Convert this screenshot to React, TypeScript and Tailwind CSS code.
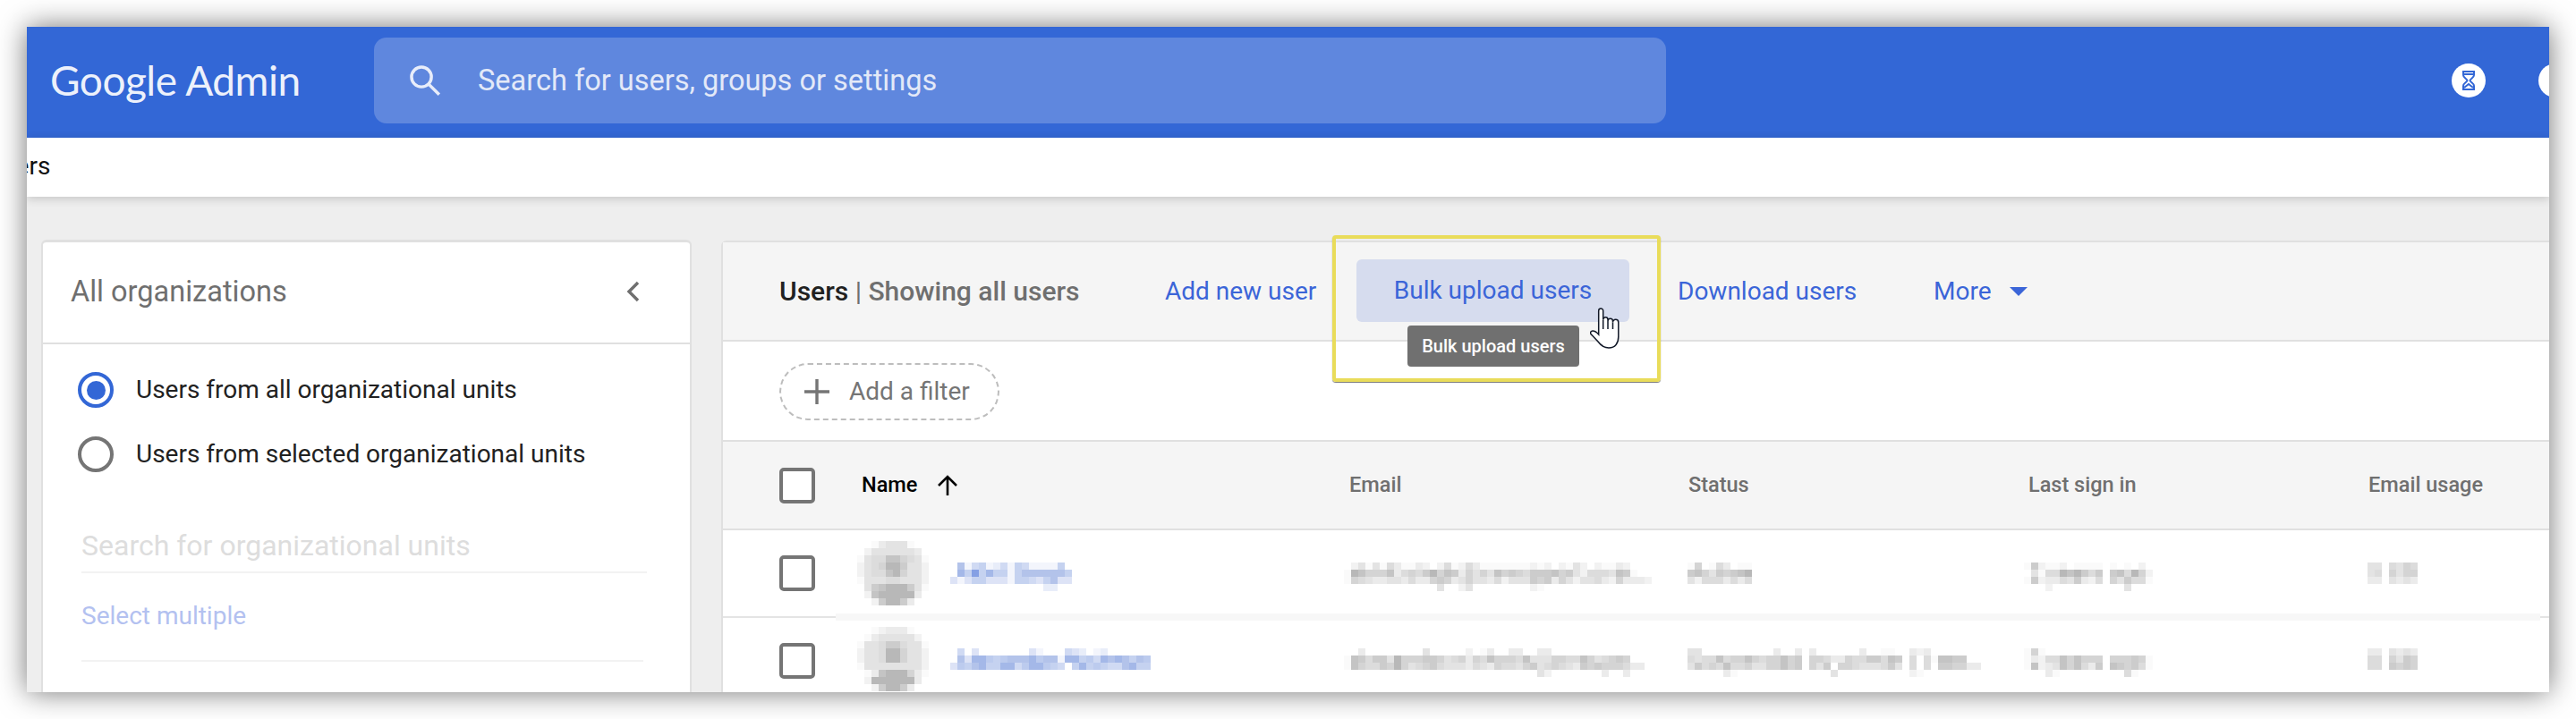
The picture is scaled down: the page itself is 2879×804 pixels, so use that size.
import React from "react";

const GRAY = ["none", "#fafafa", "#f2f2f2", "#ebebeb", "#e3e3e3", "#dcdcdc", "#d4d4d4", "#cccccc", "#c4c4c4", "#b8b8b8"];
const BLUE = ["none", "#f3f5fc", "#e8edf9", "#dde3f6", "#d0daf3", "#c5d2f0", "#bccbee", "#b3c3ea", "#a4b8e8", "#85a0e4"];

function Mosaic({ rows, ramp = GRAY, className = "" }: { rows: string[]; ramp?: string[]; className?: string }) {
  const w = Math.max(...rows.map((r) => r.length));
  return (
    <svg width={w * 8} height={rows.length * 8} viewBox={`0 0 ${w * 8} ${rows.length * 8}`} shapeRendering="crispEdges" className={"block shrink-0 " + className}>
      {rows.map((r, y) =>
        r.split("").map((c, x) => (c === "0" ? null : <rect key={x + "-" + y} x={x * 8} y={y * 8} width={8} height={8} fill={ramp[Number(c)]} />))
      )}
    </svg>
  );
}

const AVATAR = ["0013444100", "0244444430", "1455886541", "2456997442", "2455896442", "1444554442", "0478999741", "0289999930", "0027997300"];
const AVATAR2 = ["0012333100", "0134444420", "1445775441", "2445996442", "2445996442", "1444444442", "0138999631", "0299999930", "0027997300"];
const NAME1 = ["0714512415411115", "08595855157777775", "31355333155435733", "000000000000022"];
const NAME2 = ["0403000000031000432012000000", "0738865677786771885648787576", "3657855884688654058565447855", ""];
const EMAIL1 = ["0241415311320251253111111121202142021132", "19866683565796873646486765777867425554871", "1654334435336763464435244476736424453263332", "0000000000000400240000000021"];
const EMAIL2 = ["00300000000400000201300330033", "1875774966677645636586665844466558645676", "186557696456754443543655467456543767666533", "0000000000000000000000000004200000003003"];
const STATUS1 = ["160153011", "786476789", "425553535", ""];
const STATUS2 = ["4400000000003003030000003001100323", "545585668656686706653365577587050518877", "47565855644668670647066544457405050776633", "000003100000000000004000000000021"];
const LAST1 = ["17211201111010102", "041559897570785962", "172335473250647551", "000200000000004"];
const LAST2 = ["161", "132558686660666761", "182348685370876751", "0003100000000051"];
const USAGE1 = ["4405465", "4506466", "3304343", ""];
const USAGE2 = ["3304343", "5506476", "5507676", ""];

function Checkbox() {
  return <div className="h-[40px] w-[40px] rounded-[5px] border-[4px] border-[#757575] bg-white" />;
}

function Row({ name, email, status, last, usage, top, avatar, avatarClass }: { name: string[]; email: string[]; status: string[]; last: string[]; usage: string[]; top: string; avatar: string[]; avatarClass: string }) {
  return (
    <div className="grid h-[96px] shrink-0 grid-cols-[92px_545px_379px_380px_380px_1fr] items-center pl-[63px]">
      <Checkbox />
      <div className="-ml-[5px] flex items-center gap-[24px]">
        <Mosaic rows={avatar} className={avatarClass} />
        <Mosaic rows={name} ramp={BLUE} className={top} />
      </div>
      <Mosaic rows={email} className={"-ml-[6px] " + top} />
      <Mosaic rows={status} className={"-ml-[1px] " + top} />
      <Mosaic rows={last} className={"-ml-[5px] " + top} />
      <Mosaic rows={usage} className={"-ml-[1px] " + top} />
    </div>
  );
}

export default function App() {
  return (
    <div className="h-[804px] w-[2879px] overflow-hidden bg-white p-[30px] font-['Roboto',sans-serif]">
      <div className="flex h-[744px] w-[2819px] flex-col overflow-hidden bg-[#eeeeee] shadow-[0_0_30px_rgba(0,0,0,0.55)]">
        {/* top bar */}
        <header className="flex h-[124px] shrink-0 items-center bg-[#3367d6] pb-[4px] pl-[26px]">
          <span className="w-[362px] font-['Lato',sans-serif] text-[46px] leading-none tracking-[-0.5px] text-[#edf1fb]">Google Admin</span>
          <div className="flex h-[96px] w-[1444px] items-center rounded-[14px] bg-[#5f87de] pl-[38px]">
            <svg width="38" height="38" viewBox="0 0 24 24" fill="none" stroke="#e8edfa" strokeWidth="2.2" className="shrink-0">
              <circle cx="9.5" cy="9.5" r="7" />
              <path d="M14.6 14.6 L22 22" />
            </svg>
            <span className="ml-[40px] text-[32.5px] text-[#e3e9f8]">Search for users, groups or settings</span>
          </div>
          <div className="ml-auto flex h-[38px] w-[38px] items-center justify-center rounded-full bg-white">
            <svg width="14" height="22" viewBox="0 0 14 22" fill="none" stroke="#3367d6" strokeWidth="2">
              <path d="M1 1 H13 V5 C13 8 9 9 8.5 11 C9 13 13 14 13 17 V21 H1 V17 C1 14 5 13 5.5 11 C5 9 1 8 1 5 Z" />
              <path d="M2 4 H12 M2 19 L7 15 L12 19" />
            </svg>
          </div>
          <div className="-mr-[26px] ml-[59px] h-[38px] w-[38px] shrink-0 rounded-full bg-white" />
        </header>

        {/* breadcrumb */}
        <div className="relative z-10 flex h-[66px] shrink-0 items-center bg-white pb-[2px] shadow-[0_2px_10px_rgba(0,0,0,0.18)]">
          <span className="-ml-[45px] text-[28px] text-[#111111]">Users</span>
        </div>

        {/* body */}
        <div className="flex min-h-0 flex-1 pl-[16px] pt-[48px]">
          {/* left card */}
          <aside className="flex w-[727px] shrink-0 flex-col rounded-t-[6px] border-x-2 border-t-[3px] border-[#e0e0e0] bg-white">
            <div className="flex h-[114px] shrink-0 items-center justify-between border-b-2 border-[#e0e0e0] pb-[2px] pl-[31px] pr-[55px]">
              <span className="text-[32.5px] text-[#6f6f6f]">All organizations</span>
              <svg width="16" height="24" viewBox="0 0 16 24" fill="none" stroke="#6f6f6f" strokeWidth="3.4">
                <path d="M13 2 L3 12 L13 22" />
              </svg>
            </div>
            <div className="ml-[39px] mt-[31px] flex h-[40px] items-center gap-[25px]">
              <div className="flex h-[40px] w-[40px] items-center justify-center rounded-full border-[4px] border-[#3367d6]">
                <div className="h-[21px] w-[21px] rounded-full bg-[#3367d6]" />
              </div>
              <span className="text-[28px] text-[#212121]">Users from all organizational units</span>
            </div>
            <div className="ml-[39px] mt-[32px] flex h-[40px] items-center gap-[25px]">
              <div className="h-[40px] w-[40px] rounded-full border-[4px] border-[#757575]" />
              <span className="text-[28px] text-[#212121]">Users from selected organizational units</span>
            </div>
            <div className="ml-[43px] mr-[48px] mt-[62px] h-[51px] border-b-2 border-[#f2f2f2] text-[32px] leading-[40px] text-[#dddddd]">Search for organizational units</div>
            <div className="ml-[43px] mt-[28px] text-[28px] leading-[40px] text-[#b3c1f0]">Select multiple</div>
            <div className="ml-[43px] mr-[52px] mt-[29px] h-[2px] bg-[#f2f2f2]" />
          </aside>

          {/* right card */}
          <main className="ml-[33px] mt-[1px] flex min-w-0 flex-1 flex-col rounded-tl-[6px] border-l-2 border-t-2 border-[#e0e0e0] bg-white">
            <div className="relative flex h-[111px] shrink-0 items-center border-b-2 border-[#e0e0e0] bg-[#f5f5f5] pl-[63px]">
              <div className="w-[431px] text-[30px]">
                <span className="font-medium text-[#212121]">Users</span>
                <span className="text-[#6f6f6f]"> | </span>
                <span className="font-medium text-[#6f6f6f]">Showing all users</span>
              </div>
              <span className="w-[214px] text-[28px] text-[#3b65d8]">Add new user</span>
              <div className="mb-[1px] flex h-[70px] w-[305px] items-center justify-center rounded-[6px] bg-[#d6dcee] text-[28px] text-[#3b65d8]">Bulk upload users</div>
              <span className="ml-[54px] w-[286px] text-[28px] text-[#3b65d8]">Download users</span>
              <span className="w-[85px] text-[28px] text-[#3b65d8]">More</span>
              <svg width="20" height="10" viewBox="0 0 20 10" className="shrink-0">
                <path d="M0 0 H20 L10 10 Z" fill="#3b65d8" />
              </svg>

              {/* highlight overlay */}
              <div className="absolute left-[681px] top-[-8px] z-20 h-[164px] w-[367px] rounded-[4px] border-[4px] border-[#e9dc5a] shadow-[0_1px_1px_rgba(0,0,0,0.55)]" />
              <div className="absolute left-[765px] top-[93px] z-20 flex h-[46px] w-[192px] items-center justify-center rounded-[4px] bg-[#707070] text-[20px] font-medium text-white">Bulk upload users</div>
              <svg width="34" height="47" viewBox="0 0 34 47" className="absolute left-[969px] top-[73px] z-30">
                <path d="M9.7 3.5 a2.5 2.5 0 0 1 5 0 V13.5 a2.6 2.6 0 0 1 5.3 0 V15 a2.7 2.7 0 0 1 5.5 0 V16.5 a3 3 0 0 1 6.3 0 V32 C32 40 28 45 21 45 C15 45 12 42 9 38 L1 29.5 C0 28 1 26 3 26 C5 26 8 28 9.7 30 Z" fill="#ffffff" stroke="#111827" strokeWidth="1.5" />
                <path d="M14.7 13.5 V24 M20 15 V24 M25.5 16.5 V24" fill="none" stroke="#111827" strokeWidth="1.5" />
              </svg>
            </div>

            <div className="flex h-[112px] shrink-0 items-center border-b-2 border-[#e0e0e0] pl-[63px] pt-[1px]">
              <div className="flex h-[64px] w-[246px] items-center rounded-full border-2 border-dashed border-[#bdbdbd] pl-[25px] text-[28px] text-[#757575]">
                <svg width="30" height="30" viewBox="0 0 30 30" stroke="#757575" strokeWidth="3.4" className="shrink-0">
                  <path d="M15 1 V29 M1 15 H29" />
                </svg>
                <span className="ml-[21px]">Add a filter</span>
              </div>
            </div>

            <div className="grid h-[99px] shrink-0 grid-cols-[92px_545px_379px_380px_380px_1fr] items-center border-b-2 border-[#e0e0e0] bg-[#f5f5f5] pl-[63px] text-[23.5px] font-medium text-[#6f6f6f]">
              <Checkbox />
              <div className="flex items-center gap-[22px] text-black">
                <span>Name</span>
                <svg width="24" height="24" viewBox="0 0 24 24" fill="none" stroke="#000000" strokeWidth="2.6">
                  <path d="M12 23 V2 M2 12 L12 2 L22 12" />
                </svg>
              </div>
              <span>Email</span>
              <span>Status</span>
              <span>Last sign in</span>
              <span>Email usage</span>
            </div>

            <Row name={NAME1} email={EMAIL1} status={STATUS1} last={LAST1} usage={USAGE1} avatar={AVATAR} avatarClass="" top="mt-[8px]" />
            <div className="relative h-[2px] shrink-0 bg-[#e4e4e4]">
              <div className="absolute -top-[3px] left-[126px] right-[10px] h-[8px] bg-[#f7f7f7]" />
            </div>
            <Row name={NAME2} email={EMAIL2} status={STATUS2} last={LAST2} usage={USAGE2} avatar={AVATAR2} avatarClass="mb-[4px]" top="mt-[4px]" />
          </main>
        </div>
      </div>
    </div>
  );
}
